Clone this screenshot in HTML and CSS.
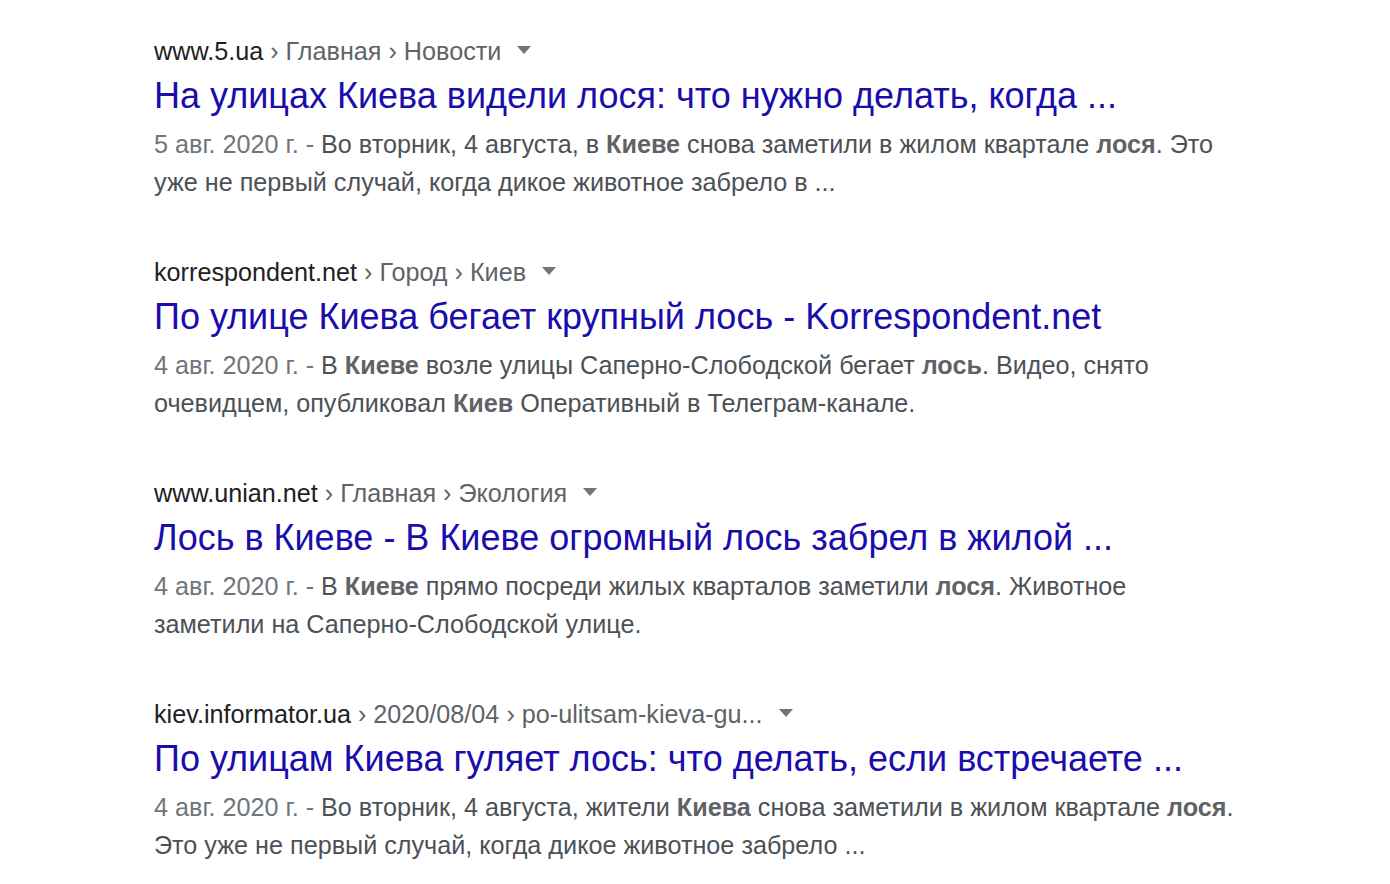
FILE: index.html
```html
<!DOCTYPE html>
<html lang="ru">
<head>
<meta charset="utf-8">
<link rel="stylesheet" href="styles.css">
</head>
<body>
<div class="results">
  <div class="result">
    <div class="crumb"><span class="domain">www.5.ua</span><span class="path"> › Главная › Новости</span><span class="arrow"></span></div>
    <div class="title">На улицах Киева видели лося: что нужно делать, когда ...</div>
    <div class="snippet"><span class="date">5 авг. 2020 г. - </span>Во вторник, 4 августа, в <b>Киеве</b> снова заметили в жилом квартале <b>лося</b>. Это уже не первый случай, когда дикое животное забрело в ...</div>
  </div>
  <div class="result">
    <div class="crumb"><span class="domain">korrespondent.net</span><span class="path"> › Город › Киев</span><span class="arrow"></span></div>
    <div class="title">По улице Киева бегает крупный лось - Korrespondent.net</div>
    <div class="snippet"><span class="date">4 авг. 2020 г. - </span>В <b>Киеве</b> возле улицы Саперно-Слободской бегает <b>лось</b>. Видео, снято очевидцем, опубликовал <b>Киев</b> Оперативный в Телеграм-канале.</div>
  </div>
  <div class="result">
    <div class="crumb"><span class="domain">www.unian.net</span><span class="path"> › Главная › Экология</span><span class="arrow"></span></div>
    <div class="title">Лось в Киеве - В Киеве огромный лось забрел в жилой ...</div>
    <div class="snippet"><span class="date">4 авг. 2020 г. - </span>В <b>Киеве</b> прямо посреди жилых кварталов заметили <b>лося</b>. Животное заметили на Саперно-Слободской улице.</div>
  </div>
  <div class="result">
    <div class="crumb"><span class="domain">kiev.informator.ua</span><span class="path"> › 2020/08/04 › po-ulitsam-kieva-gu...</span><span class="arrow"></span></div>
    <div class="title">По улицам Киева гуляет лось: что делать, если встречаете ...</div>
    <div class="snippet"><span class="date">4 авг. 2020 г. - </span>Во вторник, 4 августа, жители <b>Киева</b> снова заметили в жилом квартале <b>лося</b>. Это уже не первый случай, когда дикое животное забрело ...</div>
  </div>
</div>
</body>
</html>
```
FILE: styles.css
```css
html, body {
  margin: 0;
  padding: 0;
  background: #fff;
}
body {
  font-family: "Liberation Sans", Arial, sans-serif;
}
.results {
  display: flex;
  flex-direction: column;
  gap: 56px;
  padding: 36px 0 0 154px;
}
.result {
  width: 1085px;
}
.crumb {
  font-size: 25.2px;
  line-height: 30px;
  display: flex;
  align-items: center;
  white-space: nowrap;
}
.domain {
  color: #202124;
}
.path {
  color: #5f6368;
  white-space: pre;
}
.arrow {
  width: 0;
  height: 0;
  margin-left: 16px;
  margin-top: -2px;
  border-left: 7px solid transparent;
  border-right: 7px solid transparent;
  border-top: 8px solid #70757a;
}
.title {
  margin-top: 9px;
  font-size: 36px;
  line-height: 42px;
  color: #1a0dab;
  white-space: nowrap;
}
.snippet {
  margin-top: 8px;
  font-size: 25.2px;
  line-height: 38px;
  color: #4d5156;
}
.snippet b {
  color: #5f6368;
}
.date {
  color: #70757a;
}
```
